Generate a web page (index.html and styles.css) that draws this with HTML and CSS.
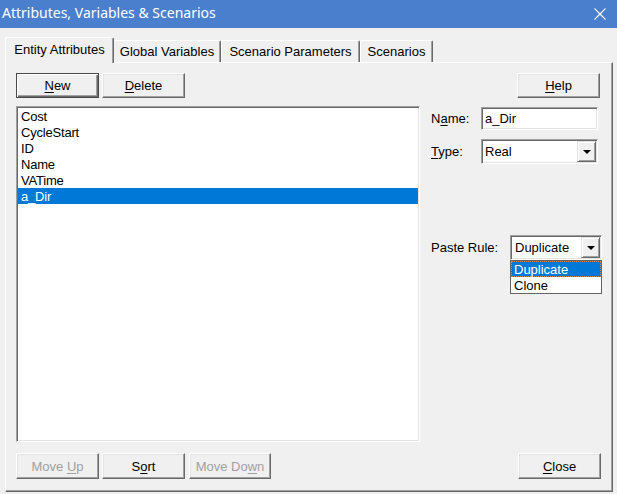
FILE: index.html
```html
<!doctype html>
<html lang="en-US">

  <head>
    <meta charset="utf-8">
    <meta name="viewport" content="width=device-width, initial-scale=1">
    <title>Attributes, Variables &amp; Scenarios</title>
    <link rel="stylesheet" href="styles.css">
  </head>

  <body>
    <div class="titlebar">
      <span class="title">Attributes, Variables &amp; Scenarios</span>
      <span class="fill"></span>
      <svg class="close" width="14" height="14" viewBox="0 0 14 14">
        <path d="M1.5 1.5 L12.5 12.5 M12.5 1.5 L1.5 12.5" stroke="#fff" stroke-width="1.1" fill="none"/>
      </svg>
    </div>

    <div class="window">
      <div class="tabs">
        <div class="tab active tab-entity">Entity Attributes</div>
        <div class="tab tab-global">Global Variables</div>
        <div class="tab tab-params">Scenario Parameters</div>
        <div class="tab tab-scen">Scenarios</div>
      </div>

      <div class="panel">
        <div class="toolbar">
          <button class="btn default"><u>N</u>ew</button>
          <button class="btn"><u>D</u>elete</button>
          <span class="fill"></span>
          <button class="btn"><u>H</u>elp</button>
        </div>

        <div class="main">
          <div class="listbox">
            <ul>
              <li>Cost</li>
              <li>CycleStart</li>
              <li>ID</li>
              <li>Name</li>
              <li>VATime</li>
              <li class="selected">a_Dir</li>
            </ul>
          </div>

          <div class="side">
            <div class="field name-field">
              <label class="field-label">N<u>a</u>me:</label>
              <div class="input">a_Dir</div>
            </div>
            <div class="field type-field">
              <label class="field-label"><u>T</u>ype:</label>
              <div class="combo">
                <span class="combo-value">Real</span>
                <span class="combo-btn"><span class="arrow"></span></span>
              </div>
            </div>
            <div class="field paste-field">
              <label class="field-label paste-label">Paste Rule:</label>
              <div class="combo paste-combo">
                <span class="combo-value">Duplicate</span>
                <span class="combo-btn"><span class="arrow"></span></span>
                <ul class="dropdown">
                  <li class="current">Duplicate</li>
                  <li>Clone</li>
                </ul>
              </div>
            </div>
          </div>
        </div>

        <div class="footer">
          <button class="btn" disabled>Move <u>U</u>p</button>
          <button class="btn">S<u>o</u>rt</button>
          <button class="btn" disabled>Move Do<u>w</u>n</button>
          <span class="fill"></span>
          <button class="btn close-btn"><u>C</u>lose</button>
        </div>
      </div>
    </div>
  </body>

</html>
```

FILE: styles.css
```css
html,
body {
  margin: 0;
  padding: 0;
}

body {
  width: 617px;
  height: 494px;
  overflow: hidden;
  background: #f0f0f0;
  color: #000;
  font-family: "Liberation Sans", Arial, sans-serif;
  font-size: 13px;
}

.fill {
  flex: 1;
}

u {
  text-decoration: underline;
  text-underline-offset: 2px;
}

/* title bar */

.titlebar {
  height: 28px;
  display: flex;
  align-items: center;
  background: #4a7fcd;
  color: #fff;
  padding: 0 10px 3px 2px;
  box-sizing: border-box;
}

.title {
  font-family: "Noto Sans", "Open Sans", sans-serif;
  font-size: 14px;
}

.close {
  margin-top: 2px;
}

/* tabs */

.window {
  padding: 9px 4px 0 5px;
}

.tabs {
  display: flex;
  align-items: flex-end;
  height: 25px;
}

.tab {
  height: 22px;
  line-height: 21px;
  text-align: center;
  box-sizing: border-box;
  border-top: 1px solid #fff;
  border-left: 1px solid #fff;
  border-right: 1px solid #696969;
  box-shadow: inset -1px 0 #a0a0a0;
  border-radius: 2px 2px 0 0;
}

.tab.active {
  height: 26px;
  line-height: 24px;
  margin-bottom: -1px;
  background: #f0f0f0;
  position: relative;
  z-index: 1;
}

.tab-entity {
  width: 109px;
}

.tab-global {
  width: 107px;
  border-left: none;
}

.tab-params {
  width: 139px;
}

.tab-scen {
  width: 73px;
}

/* panel */

.panel {
  height: 430px;
  box-sizing: border-box;
  border-top: 1px solid #fff;
  border-left: 1px solid #fff;
  border-right: 1px solid #696969;
  border-bottom: 1px solid #696969;
  box-shadow: inset -1px -1px #a0a0a0;
  padding: 10px 12px 0 10px;
  display: flex;
  flex-direction: column;
}

.toolbar,
.footer {
  display: flex;
  gap: 3px;
}

.footer {
  margin-top: 11px;
  margin-right: -1px;
}

.footer .btn:nth-child(3) {
  width: 82px;
  margin-left: 1px;
}

.btn {
  width: 83px;
  height: 25px;
  padding: 0;
  font: inherit;
  color: #000;
  background: #f0f0f0;
  border: 1px solid;
  border-color: #fff #696969 #696969 #fff;
  box-shadow: inset -1px -1px #a0a0a0, inset 1px 1px #e3e3e3;
}

.footer .btn {
  height: 26px;
}

.btn.default {
  border-color: #4a4a4a;
  box-shadow: inset 1px 1px #fff, inset -1px -1px #696969, inset -2px -2px #a0a0a0;
}

.btn:disabled {
  color: #a0a0a0;
}

/* list */

.main {
  display: flex;
  margin-top: 8px;
}

.listbox {
  flex: none;
  width: 404px;
  height: 336px;
  box-sizing: border-box;
  background: #fff;
  border: 1px solid;
  border-color: #a0a0a0 #fff #fff #a0a0a0;
  box-shadow: inset 1px 1px #696969, inset -1px -1px #e3e3e3;
  padding: 1px;
}

.listbox ul,
.dropdown {
  list-style: none;
  margin: 0;
  padding: 0;
}

.listbox li {
  height: 16px;
  line-height: 17px;
  padding-left: 3px;
  letter-spacing: -0.2px;
}

.listbox li.selected {
  background: #0078d7;
  color: #fff;
}

/* side fields */

.side {
  flex: none;
  margin-left: 11px;
  display: flex;
  flex-direction: column;
}

.field {
  display: flex;
  align-items: center;
}

.field-label {
  width: 50px;
}

.paste-label {
  width: 79px;
}

.name-field {
  margin-top: 1px;
}

.type-field {
  margin-top: 9px;
}

.paste-field {
  margin-top: 71px;
}

.input,
.combo {
  width: 117px;
  box-sizing: border-box;
  background: #fff;
  border: 1px solid;
  border-color: #a0a0a0 #fff #fff #a0a0a0;
  box-shadow: inset 1px 1px #696969, inset -1px -1px #e3e3e3;
  padding: 1px;
}

.input {
  height: 23px;
  line-height: 19px;
  padding-left: 3px;
}

.combo {
  height: 25px;
  display: flex;
  position: relative;
}

.combo-value {
  flex: 1;
  line-height: 21px;
  padding-left: 2px;
}

.paste-combo {
  width: 92px;
}

.paste-combo .combo-value {
  padding-left: 3px;
}

.combo-btn {
  width: 19px;
  box-sizing: border-box;
  background: #f0f0f0;
  border: 1px solid;
  border-color: #e3e3e3 #696969 #696969 #e3e3e3;
  box-shadow: inset 1px 1px #fff, inset -1px -1px #a0a0a0;
  display: flex;
  align-items: center;
  justify-content: center;
}

.arrow {
  width: 0;
  height: 0;
  border-left: 4px solid transparent;
  border-right: 4px solid transparent;
  border-top: 4px solid #000;
  margin-top: 1px;
}

.dropdown {
  position: absolute;
  top: 100%;
  left: -1px;
  width: 92px;
  box-sizing: border-box;
  margin-top: 1px;
  background: #fff;
  border: 1px solid #646464;
}

.dropdown li {
  height: 16px;
  line-height: 15px;
  padding-left: 2px;
  box-sizing: border-box;
  border: 1px dotted transparent;
}

.dropdown li.current {
  background: #0078d7;
  color: #fff;
  border-color: #d0884a;
}
```
